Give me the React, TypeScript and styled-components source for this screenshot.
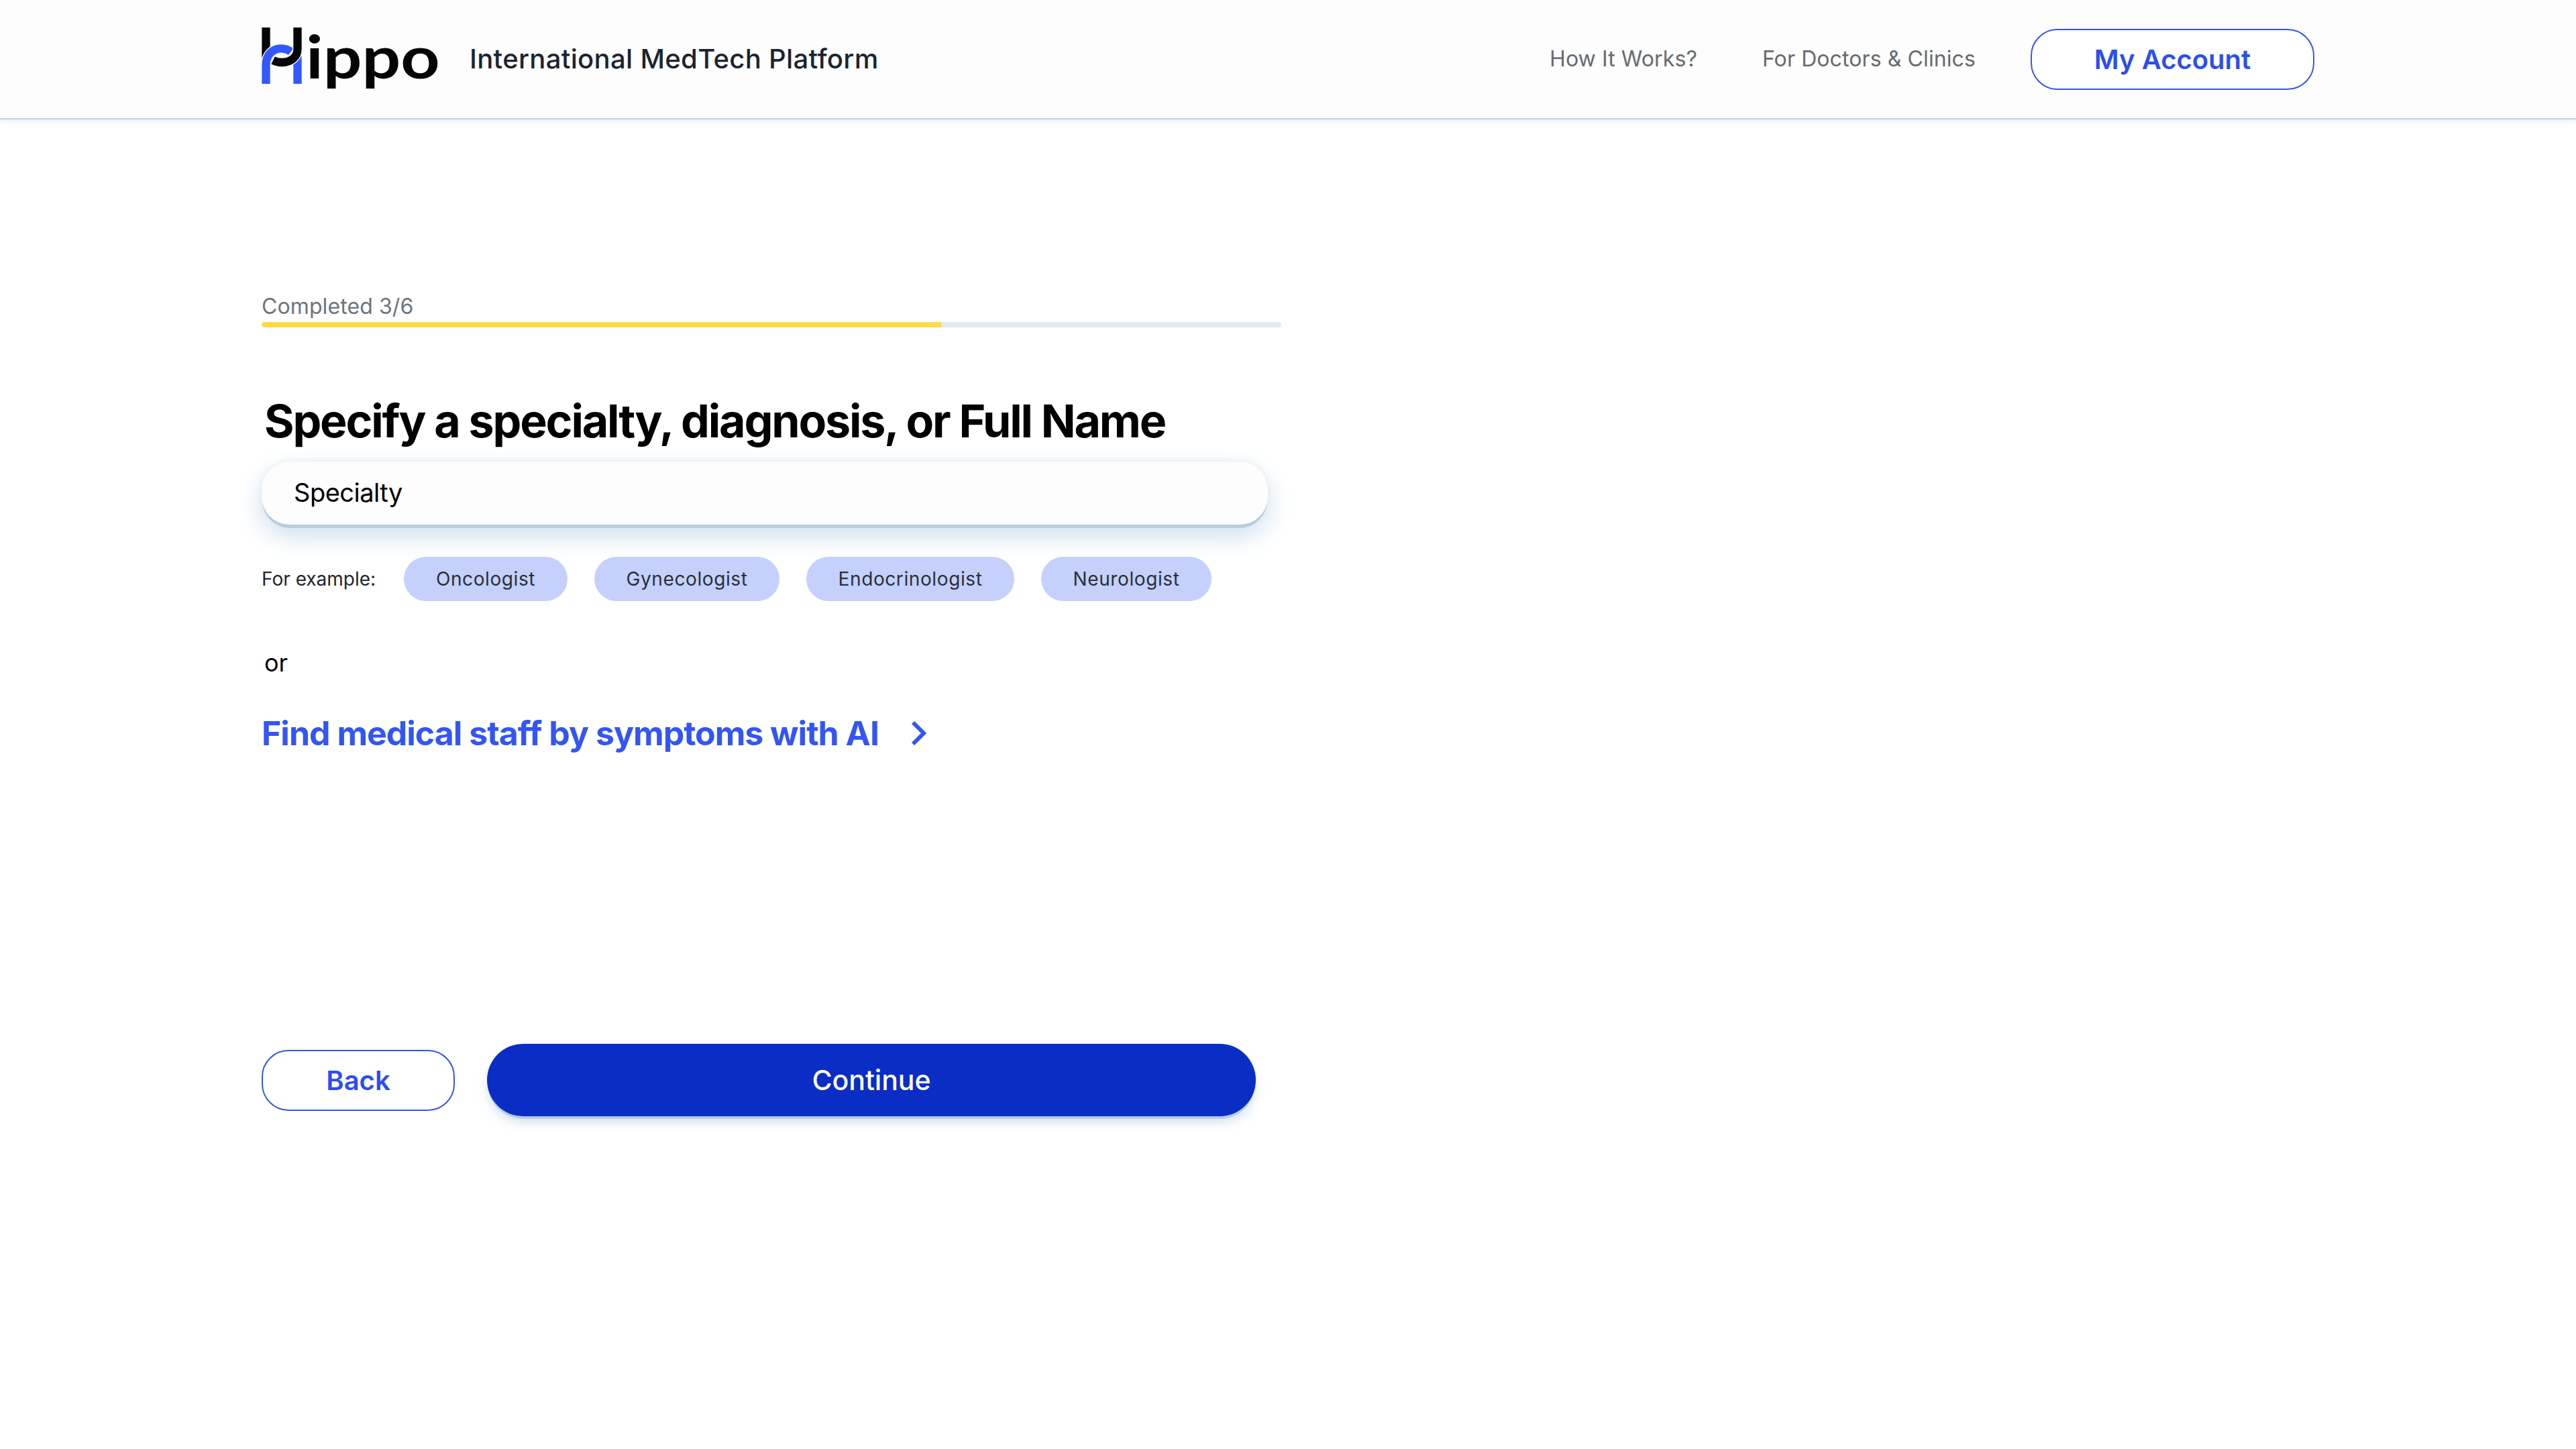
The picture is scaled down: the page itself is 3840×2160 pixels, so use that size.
import React from "react";
import styled, { createGlobalStyle } from "styled-components";

const Global = createGlobalStyle`
  html, body { margin: 0; padding: 0; background: #ffffff; }
  body { font-family: Inter, "Liberation Sans", sans-serif; color: #000; }
  #root { width: 3840px; min-height: 2160px; }
`;

const Header = styled.header`
  height: 176px;
  box-sizing: content-box;
  background: #fdfdfd;
  border-bottom: 2px solid #bdd2e4;
  box-shadow: 0 3px 6px rgba(189, 210, 228, 0.35);
  padding: 0 390px;
  display: flex;
  align-items: center;
`;
const Logo = styled.div`
  display: flex;
  align-items: flex-start;
  gap: 6px;
  height: 96px;
  width: 266px;
  flex: none;
`;
const Mark = styled.svg`
  width: 60px;
  height: 84px;
  margin-top: 1px;
  flex: none;
`;
const Wordmark = styled.span`
  font-family: Lato, Inter, sans-serif;
  font-weight: 700;
  font-size: 88px;
  line-height: 86px;
  color: #050505;
  transform: scaleX(1.155);
  transform-origin: 0 50%;
`;
const Tagline = styled.span`
  margin-left: 44px;
  font-size: 40px;
  font-weight: 500;
  letter-spacing: 0.33px;
  color: #1b2430;
  line-height: 48px;
`;
const Nav = styled.nav`
  margin-left: auto;
  display: flex;
  align-items: center;
`;
const NavLink = styled.a`
  font-size: 32px;
  letter-spacing: 0.1px;
  color: #646b73;
  line-height: 40px;
  margin-right: 97px;
  &:nth-child(2) { margin-right: 82px; }
`;
const OutlineButton = styled.button<{ $w: number }>`
  width: ${(p) => p.$w}px;
  height: 91px;
  box-sizing: border-box;
  background: #fff;
  border: 2px solid #3355f5;
  border-radius: 40px;
  color: #2b4ef0;
  font-family: inherit;
  font-size: 40px;
  font-weight: 600;
  padding: 0;
  flex: none;
`;
const Main = styled.main`
  padding: 259px 0 0 390px;
  width: 1520px;
`;
const ProgressLabel = styled.div`
  font-size: 32px;
  letter-spacing: 0.1px;
  line-height: 40px;
  color: #6b7480;
  margin-bottom: 3px;
`;
const Track = styled.div`
  height: 8px;
  border-radius: 4px;
  background: #dfe9f1;
  overflow: hidden;
`;
const Fill = styled.div`
  height: 100%;
  background: #ffdc45;
  border-radius: 4px 0 0 4px;
`;
const Title = styled.h1`
  margin: 99px 0 0;
  padding-left: 4px;
  font-size: 68px;
  line-height: 80px;
  font-weight: 700;
  letter-spacing: -2.15px;
  color: #000;
  white-space: nowrap;
`;
const SearchBox = styled.div`
  margin-top: 21px;
  width: 1500px;
  height: 94px;
  box-sizing: border-box;
  padding: 0 0 2px 48px;
  display: flex;
  align-items: center;
  background: #fdfdfd;
  border-radius: 42px;
  font-size: 38px;
  letter-spacing: -0.5px;
  color: #000;
  box-shadow: 0 6px 0 -1px #b7cde0, 0 16px 36px rgba(176, 203, 226, 0.65), 0 -2px 6px rgba(200, 220, 235, 0.25);
`;
const Examples = styled.div`
  margin-top: 48px;
  height: 66px;
  display: flex;
  align-items: center;
`;
const ExamplesLabel = styled.span`
  font-size: 28px;
  color: #20262e;
  width: 212px;
  flex: none;
`;
const Chips = styled.div`
  display: flex;
  gap: 40px;
`;
const Chip = styled.span<{ $w: number }>`
  width: ${(p) => p.$w}px;
  height: 66px;
  border-radius: 33px;
  background: #c5d0fd;
  color: #2a2f38;
  font-size: 28px;
  letter-spacing: 0.6px;
  display: flex;
  align-items: center;
  justify-content: center;
`;
const Or = styled.div`
  margin-top: 72px;
  padding-left: 4px;
  font-size: 36px;
  line-height: 40px;
`;
const AiLink = styled.a`
  margin-top: 55px;
  height: 60px;
  display: flex;
  align-items: center;
  gap: 47px;
  color: #3355f5;
  font-size: 50px;
  font-weight: 700;
  letter-spacing: -1px;
  white-space: nowrap;
`;
const Actions = styled.div`
  margin-top: 433px;
  display: flex;
  align-items: center;
  gap: 48px;
`;
const PrimaryButton = styled.button`
  width: 1146px;
  height: 108px;
  border: none;
  border-radius: 54px;
  background: #0a2dc6;
  color: #fff;
  font-family: inherit;
  font-size: 41px;
  font-weight: 500;
  box-shadow: 0 5px 0 -1px #b7cde0, 0 10px 14px rgba(176, 203, 226, 0.5);
  padding: 0;
  flex: none;
`;

const chips: [string, number][] = [
  ["Oncologist", 244],
  ["Gynecologist", 276],
  ["Endocrinologist", 310],
  ["Neurologist", 254],
];

const arch = "M78.5 315V230C78.500 185 110 157 145 157C165 157 178 162 190 172";
const hook = "M219.500 63V160C219.500 195 190 219 150 219C135 219 122 216 110 210";

export default function App() {
  return (
    <>
      <Global />
      <Header>
        <Logo>
          <Mark viewBox="60 63 178 252" aria-hidden="true">
            <g fill="none" strokeWidth="37">
              <path d="M78.5 63V205" stroke="#050505" />
              <path d={arch} stroke="#fdfdfd" strokeWidth="45" />
              <path d={arch} stroke="#3358ff" />
              <path d="M219.500 315V190" stroke="#3358ff" />
              <path d={hook} stroke="#fdfdfd" strokeWidth="45" />
              <path d={hook} stroke="#050505" />
            </g>
          </Mark>
          <Wordmark>ippo</Wordmark>
        </Logo>
        <Tagline>International MedTech Platform</Tagline>
        <Nav>
          <NavLink>How It Works?</NavLink>
          <NavLink>For Doctors &amp; Clinics</NavLink>
          <OutlineButton $w={423}>My Account</OutlineButton>
        </Nav>
      </Header>
      <Main>
        <ProgressLabel>Completed 3/6</ProgressLabel>
        <Track>
          <Fill style={{ width: `${(3 / 4.5) * 100}%` }} />
        </Track>
        <Title>Specify a specialty, diagnosis, or Full Name</Title>
        <SearchBox>Specialty</SearchBox>
        <Examples>
          <ExamplesLabel>For example:</ExamplesLabel>
          <Chips>
            {chips.map(([label, w]) => (
              <Chip key={label} $w={w}>{label}</Chip>
            ))}
          </Chips>
        </Examples>
        <Or>or</Or>
        <AiLink>
          Find medical staff by symptoms with AI
          <svg width="26" height="38" viewBox="0 0 26 38" fill="none" stroke="#3355f5" strokeWidth="6">
            <path d="M4 3l16 16L4 35" />
          </svg>
        </AiLink>
        <Actions>
          <OutlineButton $w={288}>Back</OutlineButton>
          <PrimaryButton>Continue</PrimaryButton>
        </Actions>
      </Main>
    </>
  );
}
